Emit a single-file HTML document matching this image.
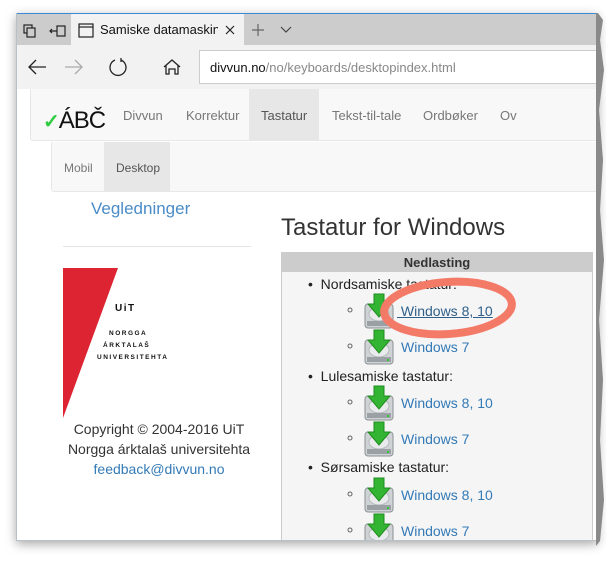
<!DOCTYPE html>
<html><head><meta charset="utf-8">
<style>
*{margin:0;padding:0;box-sizing:border-box}
body{width:606px;height:563px;background:#fff;position:relative;overflow:hidden;font-family:"Liberation Sans",Arial,sans-serif}
.a{position:absolute}
.win{left:16px;top:13px;width:582px;height:528px;background:#fff;box-shadow:0 3px 10px rgba(0,0,0,.35);overflow:hidden;border-left:1px solid #b8c0c8;border-bottom:1px solid #b8c0c8}
.t{white-space:nowrap}
.nav{color:#777;font-size:13px}
.lnk{color:#337ab7;font-size:14px}
.li{font-size:14px;color:#222}
</style></head><body>
<div class="a win">
  <div class="a" style="left:0;top:0;width:582px;height:1px;background:#3b8ad8"></div>
  <div class="a" style="left:0;top:1px;width:582px;height:31px;background:#cccccc"></div>
  <div class="a" style="left:54px;top:1px;width:173px;height:31px;background:#f2f2f2"></div>
  <svg class="a" style="left:0;top:0" width="300" height="32">
    <g fill="none" stroke="#222" stroke-width="1.2">
      <rect x="7" y="12" width="8" height="8"/><rect x="10" y="15" width="8" height="9" fill="#ccc"/>
      <rect x="40" y="13" width="8" height="10"/><path d="M33 18h7M35 16l-2 2 2 2"/>
      <rect x="62" y="11" width="14" height="13"/><path d="M62 14h14"/>
      <path d="M209 13l8 8M217 13l-8 8"/>
      <path d="M241 11v12M235 17h12" stroke="#666"/>
      <path d="M264 14l5 5 5-5" stroke="#444"/>
    </g>
  </svg>
  <div class="a t" style="left:83px;top:9px;font-size:13px;color:#111;width:118px;overflow:hidden">Samiske datamaskintastatur</div>
  <div class="a" style="left:0;top:32px;width:582px;height:44px;background:#f2f2f2"></div>
  <svg class="a" style="left:0;top:32px" width="170" height="44">
    <g fill="none" stroke-width="1.3">
      <path d="M12 22h17M19 15l-7 7 7 7" stroke="#222"/>
      <path d="M48 22h17M58 15l7 7-7 7" stroke="#aaa"/>
      <path d="M104 15a8 8 0 1 1-6 0" stroke="#222"/><path d="M104 13v4" stroke="#222"/>
      <path d="M147 22l8-7 8 7M149 20v9h3v-5h6v5h3v-9" stroke="#222"/>
    </g>
  </svg>
  <div class="a" style="left:182px;top:37px;width:420px;height:34px;background:#fff;border:1px solid #ccc"></div>
  <div class="a t" style="left:193px;top:47px;font-size:13px;color:#111">divvun.no<span style="color:#888">/no/keyboards/desktopindex.html</span></div>
  <div class="a" style="left:13px;top:76px;width:580px;height:52px;background:#f8f8f8;border:1px solid #e7e7e7;border-top:0;border-radius:0 0 3px 3px"></div>
  <div class="a" style="left:232px;top:76px;width:70px;height:51px;background:#e7e7e7"></div>
  <div class="a t" style="left:26px;top:94px;font-size:24px;color:#111;line-height:28px;letter-spacing:-1px"><span style="color:#2ecc40;font-weight:bold;font-size:20px">✓</span>ÁBČ</div>
  <div class="a t nav" style="left:106px;top:95px">Divvun</div>
  <div class="a t nav" style="left:169px;top:95px">Korrektur</div>
  <div class="a t nav" style="left:244px;top:95px;color:#555">Tastatur</div>
  <div class="a t nav" style="left:315px;top:95px">Tekst-til-tale</div>
  <div class="a t nav" style="left:406px;top:95px">Ordbøker</div>
  <div class="a t nav" style="left:483px;top:95px">Ov</div>
  <div class="a" style="left:34px;top:129px;width:560px;height:50px;background:#f8f8f8;border:1px solid #e7e7e7;border-top:0;border-radius:0 0 3px 3px"></div>
  <div class="a" style="left:87px;top:129px;width:66px;height:49px;background:#e7e7e7"></div>
  <div class="a t" style="left:47px;top:148px;font-size:12px;color:#777">Mobil</div>
  <div class="a t" style="left:99px;top:148px;font-size:12px;color:#555">Desktop</div>
  <div class="a t" style="left:74px;top:186px;font-size:17px;color:#4a8cc8">Vegledninger</div>
  <div class="a" style="left:46px;top:233px;width:188px;height:1px;background:#e5e5e5"></div>
  <svg class="a" style="left:46px;top:255px" width="110" height="152"><path d="M0 0H55L0 150Z" fill="#dc2432"/>
   <g font-family="Liberation Sans,sans-serif" font-weight="bold" fill="#111" letter-spacing="1.5">
   <text x="52" y="43" font-size="10">UiT</text>
   <text x="46" y="67" font-size="6.5">NORGGA</text>
   <text x="40" y="79" font-size="6.5">ÁRKTALAŠ</text>
   <text x="34" y="91" font-size="6.5">UNIVERSITEHTA</text></g></svg>
  <div class="a t" style="left:44px;top:406px;width:196px;text-align:center;font-size:14px;color:#333;line-height:20px">Copyright © 2004-2016 UiT<br>Norgga árktalaš universitehta<br><span style="color:#337ab7">feedback@divvun.no</span></div>
  <div class="a t" style="left:264px;top:201px;font-size:24px;color:#333">Tastatur for Windows</div>
  <div class="a" style="left:264px;top:239px;width:312px;height:290px;background:#f5f5f5;border-left:1px solid #ccc;border-right:1px solid #ccc"></div>
  <div class="a" style="left:264px;top:239px;width:312px;height:20px;background:#cccccc;text-align:center;font-weight:bold;font-size:13px;line-height:21px;color:#333">Nedlasting</div>
  <div class="a t li" style="left:291px;top:263px">•&nbsp; Nordsamiske tastatur:</div>
  <div class="a t li" style="left:291px;top:355px">•&nbsp; Lulesamiske tastatur:</div>
  <div class="a t li" style="left:291px;top:446px">•&nbsp; Sørsamiske tastatur:</div>
  <svg class="a" style="left:0;top:0" width="582" height="528">
    <defs><g id="ic">
      <rect x="1" y="10" width="28" height="24" rx="3" fill="#cfd3d6" stroke="#8a8f93"/>
      <ellipse cx="15" cy="20" rx="10" ry="7" fill="#e8eaec" stroke="#b5b9bc"/>
      <rect x="3" y="27" width="24" height="5" fill="#9aa0a4"/>
      <rect x="23" y="29" width="2" height="2" fill="#3c3"/>
      <path d="M10 0h10v10h6l-11 13L4 10h6Z" fill="#33b533" stroke="#1f8a1f"/>
    </g></defs>
    <g fill="none" stroke="#666"><circle cx="333" cy="297" r="2"/><circle cx="333" cy="333" r="2"/><circle cx="333" cy="389" r="2"/><circle cx="333" cy="425" r="2"/><circle cx="333" cy="481" r="2"/><circle cx="333" cy="517" r="2"/></g>
    <use href="#ic" x="347" y="281"/><use href="#ic" x="347" y="317"/>
    <use href="#ic" x="347" y="373"/><use href="#ic" x="347" y="409"/>
    <use href="#ic" x="347" y="465"/><use href="#ic" x="347" y="501"/>
  </svg>
  <div class="a t lnk" style="left:380px;top:290px;color:#2e5f8a;text-decoration:underline">&nbsp;Windows 8, 10</div>
  <div class="a t lnk" style="left:384px;top:326px">Windows 7</div>
  <div class="a t lnk" style="left:384px;top:382px">Windows 8, 10</div>
  <div class="a t lnk" style="left:384px;top:418px">Windows 7</div>
  <div class="a t lnk" style="left:384px;top:474px">Windows 8, 10</div>
  <div class="a t lnk" style="left:384px;top:510px">Windows 7</div>
  <svg class="a" style="left:0;top:0" width="582" height="528"><ellipse cx="431" cy="295" rx="64" ry="26" fill="none" stroke="#f47a68" stroke-width="8" transform="rotate(-4 431 295)"/></svg>
</div>
<svg class="a" style="left:0;top:0" width="606" height="563">
  <path d="M598 13 L603 20 L600 40 L604 70 L599 110 L603 160 L600 210 L604 260 L599 320 L603 380 L600 440 L604 500 L600 541 L596 546 L596 13Z" fill="#8a8a8a"/>
</svg>
</body></html>
